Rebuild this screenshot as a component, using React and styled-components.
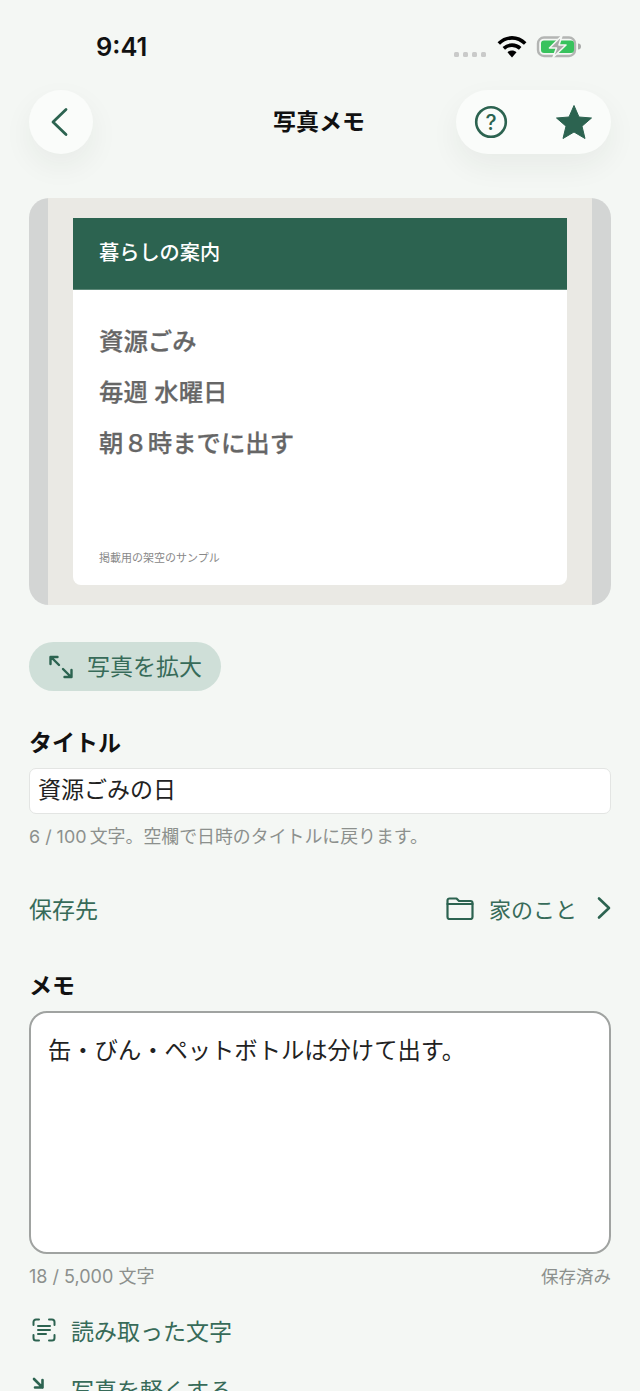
import React from 'react'
import styled, { createGlobalStyle } from 'styled-components'

const GlobalStyle = createGlobalStyle`
  html, body {
    margin: 0;
    padding: 0;
    height: 100%;
    overflow: hidden;
    background: #f4f7f4;
  }
  * { box-sizing: border-box; }
  body {
    font-family: "Inter", "Noto Sans CJK JP", sans-serif;
  }
`

const GREEN = '#2c6350'
const GREEN_TEXT = '#376b59'

const Page = styled.div`
  width: 640px;
  height: 1391px;
  overflow: hidden;
  background: #f4f7f4;
  color: #000;
`

const StatusBar = styled.div`
  height: 90px;
  padding: 32px 58px 0 96px;
  display: flex;
  justify-content: space-between;
  align-items: flex-start;
`

const Clock = styled.div`
  font-size: 25.5px;
  line-height: 30px;
  font-weight: 600;
  color: #111;
`

const StatusIcons = styled.div`
  display: flex;
  align-items: flex-start;
  margin-top: 3px;
`

const SignalDots = styled.div`
  display: flex;
  gap: 4px;
  margin: 17px 11px 0 0;
`

const SignalDot = styled.span`
  width: 5px;
  height: 5px;
  border-radius: 1.5px;
  background: #c9cac9;
`

const NavBar = styled.div`
  height: 64px;
  padding: 0 29px;
  display: flex;
  justify-content: space-between;
  align-items: center;
  position: relative;
`

const RoundButton = styled.div`
  width: 64px;
  height: 64px;
  border-radius: 50%;
  background: #fafcfa;
  box-shadow: 0 12px 30px rgba(30, 50, 40, 0.06);
  display: flex;
  align-items: center;
  justify-content: center;
`

const Capsule = styled.div`
  width: 155px;
  height: 64px;
  border-radius: 32px;
  background: #fafcfa;
  box-shadow: 0 12px 30px rgba(30, 50, 40, 0.06);
  display: flex;
  align-items: center;
  justify-content: space-between;
  padding: 0 18px 0 18px;
`

const NavTitle = styled.div`
  position: absolute;
  left: 0;
  right: 2px;
  top: 0;
  line-height: 64px;
  text-align: center;
  font-size: 23px;
  font-weight: 700;
  color: #111;
`

const Content = styled.div`
  padding: 44px 29px 0;
`

const Photo = styled.div`
  height: 407px;
  border-radius: 20px;
  background: #d3d5d4;
  padding: 0 19px;
  overflow: hidden;
`

const PhotoInner = styled.div`
  height: 100%;
  background: #eae9e4;
  padding: 20px 25px;
`

const Notice = styled.div`
  height: 367px;
  background: #fff;
  border-radius: 0 0 8px 8px;
  display: flex;
  flex-direction: column;
`

const NoticeHeader = styled.div`
  height: 72px;
  background: ${GREEN};
  border-bottom: 1px solid #5d8878;
  color: #fff;
  font-size: 20.2px;
  font-weight: 500;
  line-height: 70px;
  padding-left: 26px;
`

const NoticeBody = styled.div`
  flex: 1;
  padding: 33px 26px 0;
  display: flex;
  flex-direction: column;
  gap: 15px;
`

const NoticeLine = styled.div`
  font-size: 24.4px;
  line-height: 36px;
  font-weight: 500;
  -webkit-text-stroke: 0.25px #666;
  color: #666;
`

const NoticeNote = styled.div`
  font-size: 11px;
  line-height: 16px;
  color: #888;
  padding: 0 26px 19px;
`

const ZoomPill = styled.div`
  width: 192px;
  height: 49px;
  margin-top: 37px;
  border-radius: 25px;
  background: #cfdfd8;
  color: ${GREEN_TEXT};
  font-size: 23px;
  display: flex;
  align-items: center;
  gap: 12px;
  padding-left: 18px;
`

const PillText = styled.span`
  padding-bottom: 3px;
`

const Label = styled.div`
  font-size: 23px;
  font-weight: 700;
  line-height: 32px;
  color: #111;
`

const TitleLabel = styled(Label)`
  margin-top: 36px;
`

const TitleInput = styled.div`
  height: 46px;
  margin-top: 9px;
  background: #fff;
  border: 1px solid #e3e5e3;
  border-radius: 7px;
  padding-left: 8px;
  font-size: 23px;
  line-height: 42px;
  color: #222;
`

const Hint = styled.div`
  margin-top: 10px;
  font-size: 17.9px;
  line-height: 26px;
  color: #8c908d;
`

const FolderRow = styled.div`
  margin-top: 38px;
  height: 40px;
  display: flex;
  align-items: center;
  justify-content: space-between;
  color: ${GREEN_TEXT};
  font-size: 23px;
`

const FolderValue = styled.div`
  display: flex;
  align-items: center;
`

const FolderName = styled.span`
  margin: 0 20px 0 15px;
  font-size: 22px;
`

const MemoLabel = styled(Label)`
  margin-top: 42px;
`

const MemoBox = styled.div`
  height: 243px;
  margin-top: 9px;
  background: #fff;
  border: 2px solid #a0a3a1;
  border-radius: 18px;
  padding: 21px 17px;
  font-size: 23.3px;
  line-height: 34px;
  color: #222;
`

const MemoFooter = styled.div`
  margin-top: 10px;
  display: flex;
  justify-content: space-between;
  font-size: 18px;
  line-height: 26px;
  color: #8c908d;
`

const SavedText = styled.span`
  font-size: 17.5px;
`

const ActionRow = styled.div`
  height: 59px;
  display: flex;
  align-items: center;
  gap: 15px;
  padding-left: 3px;
  color: ${GREEN_TEXT};
  font-size: 23px;
`

const Actions = styled.div`
  margin-top: 10px;
`

const Stroke = ({ size, w = 2.2, children, vb = 24 }) => (
  <svg width={size} height={size} viewBox={`0 0 ${vb} ${vb}`} fill="none" stroke={GREEN} strokeWidth={w} strokeLinecap="round" strokeLinejoin="round">
    {children}
  </svg>
)

export default function App() {
  return (
    <Page>
      <GlobalStyle />
      <StatusBar>
        <Clock>9:41</Clock>
        <StatusIcons>
          <SignalDots>
            <SignalDot /><SignalDot /><SignalDot /><SignalDot />
          </SignalDots>
          <svg width="30" height="24" viewBox="0 0 30 24" style={{ marginRight: 9 }}>
            <path d="M1.800 8.500C9.500 1 20.500 1 28.200 8.500" fill="none" stroke="#000" strokeWidth="3.6" />
            <path d="M6.800 13.300C11.500 9 18.500 9 23.200 13.300" fill="none" stroke="#000" strokeWidth="3.6" />
            <path d="M10.500 17.300C13 15 17 15 19.500 17.300L15 22.500Z" fill="#000" />
          </svg>
          <svg width="46" height="24" viewBox="0 0 46 24">
            <rect x="2" y="2.500" width="37" height="18.500" rx="6" fill="none" stroke="#b3b5b3" strokeWidth="2.4" />
            <rect x="5" y="5.500" width="33" height="12.500" rx="3" fill="#38c25d" />
            <path d="M42 8.500c2 0 3 1 3 3s-1 3-3 3z" fill="#a9aba9" />
            <path d="M26 0.500 13.500 13h7l-3.500 9.500L30 10h-7z" fill="#a8aaa8" stroke="#f4f7f4" strokeWidth="1.600" strokeLinejoin="round" />
          </svg>
        </StatusIcons>
      </StatusBar>

      <NavBar>
        <NavTitle>写真メモ</NavTitle>
        <RoundButton>
          <svg width="32" height="32" viewBox="0 0 32 32" fill="none" stroke={GREEN} strokeWidth="2.8" strokeLinecap="round" strokeLinejoin="round" style={{ marginLeft: -3 }}>
            <path d="M22 3.500 9 16l13 12.500" />
          </svg>
        </RoundButton>
        <Capsule>
          <svg width="34" height="34" viewBox="0 0 34 34">
            <circle cx="17" cy="17" r="14.800" fill="none" stroke={GREEN} strokeWidth="2.600" />
            <text x="17" y="24.500" textAnchor="middle" fontSize="21" fontWeight="500" fill={GREEN} fontFamily="Inter">?</text>
          </svg>
          <svg width="38" height="38" viewBox="0 0 38 38">
            <path d="M19 2.500 24 14l12.500 1-9.500 8.200 3 12.300L19 29l-11 6.500 3-12.300L1.500 15 14 14z" fill={GREEN} stroke={GREEN} strokeWidth="1" strokeLinejoin="round" />
          </svg>
        </Capsule>
      </NavBar>

      <Content>
        <Photo>
          <PhotoInner>
            <Notice>
              <NoticeHeader>暮らしの案内</NoticeHeader>
              <NoticeBody>
                <NoticeLine>資源ごみ</NoticeLine>
                <NoticeLine>毎週 水曜日</NoticeLine>
                <NoticeLine>朝８時までに出す</NoticeLine>
              </NoticeBody>
              <NoticeNote>掲載用の架空のサンプル</NoticeNote>
            </Notice>
          </PhotoInner>
        </Photo>

        <ZoomPill>
          <Stroke size={28} w={2.4} vb={28}>
            <path d="M3.500 11V4h7M4 4l8 8M24.500 17v7h-7M24 24l-8-8" />
          </Stroke>
          <PillText>写真を拡大</PillText>
        </ZoomPill>

        <TitleLabel>タイトル</TitleLabel>
        <TitleInput>資源ごみの日</TitleInput>
        <Hint>6 / 100{'\u2009'}文字。空欄で日時のタイトルに戻ります。</Hint>

        <FolderRow>
          <span>保存先</span>
          <FolderValue>
            <svg width="28" height="24" viewBox="0 0 28 24" fill="none" stroke={GREEN} strokeWidth="2.2" strokeLinecap="round" strokeLinejoin="round">
              <path d="M1.500 4.500a2 2 0 0 1 2-2h7l2.500 2.500h11.500a2 2 0 0 1 2 2v14a2 2 0 0 1-2 2h-21a2 2 0 0 1-2-2z" />
              <path d="M1.500 8h25" />
            </svg>
            <FolderName>家のこと</FolderName>
            <svg width="14" height="24" viewBox="0 0 14 24" fill="none" stroke={GREEN} strokeWidth="2.600" strokeLinecap="round" strokeLinejoin="round">
              <path d="M2 2.500 12 12 2 21.500" />
            </svg>
          </FolderValue>
        </FolderRow>

        <MemoLabel>メモ</MemoLabel>
        <MemoBox>缶・びん・ペットボトルは分けて出す。</MemoBox>
        <MemoFooter>
          <span>18 / 5,000 文字</span>
          <SavedText>保存済み</SavedText>
        </MemoFooter>

        <Actions>
          <ActionRow>
            <Stroke size={24} w={2} vb={24}>
              <path d="M7 1.500H4A2.500 2.500 0 0 0 1.500 4v3M17 1.500h3A2.500 2.500 0 0 1 22.500 4v3M7 22.500H4A2.500 2.500 0 0 1 1.500 20v-3M17 22.500h3a2.500 2.500 0 0 0 2.500-2.500v-3" />
              <path d="M6 8h12M6 12h12M6 16h8" />
            </Stroke>
            読み取った文字
          </ActionRow>
          <ActionRow>
            <Stroke size={24} w={2.600} vb={24}>
              <path d="M2 2l8.500 8.500M10.500 3v7.500H3" />
            </Stroke>
            写真を軽くする
          </ActionRow>
        </Actions>
      </Content>
    </Page>
  )
}
